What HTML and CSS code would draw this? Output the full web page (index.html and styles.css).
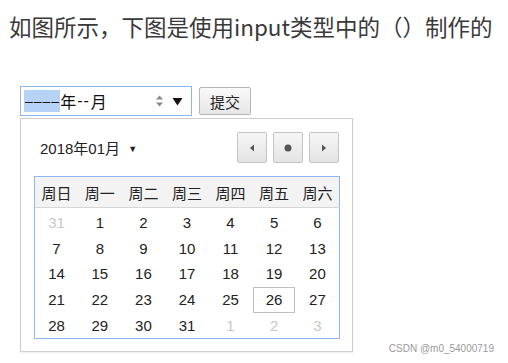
FILE: index.html
```html
<!DOCTYPE html>
<html lang="zh-CN">
<head>
    <meta charset="UTF-8">
    <meta name="viewport" content="width=device-width, initial-scale=1.0">
    <title>input month</title>
    <link rel="stylesheet" href="styles.css">
</head>
<body>
    <p class="question">如图所示，下图是使用input类型中的（）制作的</p>

    <div class="form-row">
        <div class="month-field">
            <span class="seg selected">––––</span><span class="seg">年</span><span class="seg dash">--</span><span class="seg">月</span>
            <span class="spin">
                <svg width="9" height="14" viewBox="0 0 9 14"><path d="M1 5.5 L4.5 1.5 L8 5.5 Z M1 8.5 L4.5 12.5 L8 8.5 Z" fill="#8a8a8a"/></svg>
            </span>
            <span class="drop">
                <svg width="11" height="9" viewBox="0 0 11 9"><path d="M0.5 1 L10.5 1 L5.5 8.5 Z" fill="#111"/></svg>
            </span>
        </div>
        <button class="submit">提交</button>
    </div>

    <div class="picker">
        <div class="picker-head">
            <div class="month-label">2018年01月 <span class="caret">▼</span></div>
            <div class="nav">
                <button class="nav-btn"><svg width="6" height="8" viewBox="0 0 6 8"><path d="M5 0.5 L1 4 L5 7.5 Z" fill="#555"/></svg></button>
                <button class="nav-btn"><svg width="8" height="8" viewBox="0 0 8 8"><circle cx="4" cy="4" r="3.5" fill="#555"/></svg></button>
                <button class="nav-btn"><svg width="6" height="8" viewBox="0 0 6 8"><path d="M1 0.5 L5 4 L1 7.5 Z" fill="#555"/></svg></button>
            </div>
        </div>

        <table class="cal">
            <thead>
                <tr><th>周日</th><th>周一</th><th>周二</th><th>周三</th><th>周四</th><th>周五</th><th>周六</th></tr>
            </thead>
            <tbody>
                <tr><td class="other">31</td><td>1</td><td>2</td><td>3</td><td>4</td><td>5</td><td>6</td></tr>
                <tr><td>7</td><td>8</td><td>9</td><td>10</td><td>11</td><td>12</td><td>13</td></tr>
                <tr><td>14</td><td>15</td><td>16</td><td>17</td><td>18</td><td>19</td><td>20</td></tr>
                <tr><td>21</td><td>22</td><td>23</td><td>24</td><td>25</td><td><span class="today">26</span></td><td>27</td></tr>
                <tr><td>28</td><td>29</td><td>30</td><td>31</td><td class="other">1</td><td class="other">2</td><td class="other">3</td></tr>
            </tbody>
        </table>
    </div>

    <div class="watermark">CSDN @m0_54000719</div>
</body>
</html>
```

FILE: styles.css
```css
body {
    margin: 0;
    width: 508px;
    height: 363px;
    background: #ffffff;
    font-family: "Noto Sans CJK SC", "Noto Sans", sans-serif;
    color: #333333;
    position: relative;
    overflow: hidden;
}

.question {
    margin: 0;
    padding: 11px 0 0 9px;
    font-size: 22.5px;
    line-height: 30px;
    color: #3a3a3a;
}

.form-row {
    display: flex;
    align-items: flex-start;
    gap: 7px;
    margin: 45px 0 0 20px;
}

.month-field {
    box-sizing: border-box;
    width: 172px;
    height: 30px;
    border: 1px solid #8db3ec;
    display: flex;
    align-items: center;
    padding-left: 3px;
    font-family: "Noto Sans CJK SC", sans-serif;
    font-size: 16px;
    color: #111;
    background: #fff;
}

.seg {
    line-height: 22px;
}

.seg.selected {
    font-family: "Liberation Sans", sans-serif;
    font-size: 14px;
    letter-spacing: 1px;
    background: #b6d2f6;
    padding-left: 1px;
}

.seg.dash {
    font-family: "Liberation Sans", sans-serif;
    letter-spacing: 1px;
    padding: 0 1px;
}

.spin {
    margin-left: auto;
    display: flex;
    align-items: center;
    margin-right: 8px;
}

.drop {
    display: flex;
    align-items: center;
    margin-right: 8px;
}

.submit {
    box-sizing: border-box;
    width: 52px;
    height: 28px;
    margin-top: 1px;
    padding: 0;
    border: 1px solid #b5b5b5;
    border-radius: 2px;
    background: linear-gradient(#fafafa, #e6e6e6);
    font-family: "Noto Sans CJK SC", sans-serif;
    font-size: 15px;
    color: #222;
}

.picker {
    box-sizing: border-box;
    width: 333px;
    height: 234px;
    margin: 2px 0 0 20px;
    padding: 13px 13px 0 13px;
    border: 1px solid #cfcfcf;
    box-shadow: 0 1px 2px rgba(0, 0, 0, 0.08);
    background: #fff;
}

.picker-head {
    display: flex;
    justify-content: space-between;
    align-items: center;
    height: 31px;
}

.month-label {
    padding-left: 6px;
    font-family: "Liberation Sans", "Noto Sans CJK SC", sans-serif;
    font-size: 15px;
    color: #222;
}

.caret {
    font-size: 9px;
    margin-left: 4px;
    vertical-align: 2px;
}

.nav {
    display: flex;
    gap: 6px;
}

.nav-btn {
    box-sizing: border-box;
    width: 30px;
    height: 31px;
    padding: 0;
    border: 1px solid #c4c4c4;
    border-radius: 2px;
    background: linear-gradient(#f6f6f6, #e4e4e4);
    display: flex;
    align-items: center;
    justify-content: center;
}

.cal {
    margin-top: 13px;
    width: 306px;
    border-collapse: collapse;
    border: 1px solid #8fb6f2;
    table-layout: fixed;
    font-family: "Liberation Sans", Arial, sans-serif;
}

.cal th {
    height: 30px;
    padding: 0;
    background: #f3f3f3;
    border-bottom: 1px solid #d6d6d6;
    font-family: "Noto Sans CJK SC", sans-serif;
    font-weight: normal;
    font-size: 15px;
    color: #222;
}

.cal td {
    height: 25.5px;
    padding: 0;
    text-align: center;
    font-size: 15px;
    color: #222;
}

.cal tbody tr:first-child td {
    padding-top: 2px;
}

.cal td.other {
    color: #c8c8c8;
}

.today {
    display: inline-block;
    box-sizing: border-box;
    width: 42px;
    height: 26px;
    line-height: 24px;
    border: 1px solid #c0c0c0;
}

.watermark {
    position: absolute;
    right: 14px;
    bottom: 9px;
    font-family: "Liberation Sans", Arial, sans-serif;
    font-size: 10px;
    color: #9a9a9a;
}
```
